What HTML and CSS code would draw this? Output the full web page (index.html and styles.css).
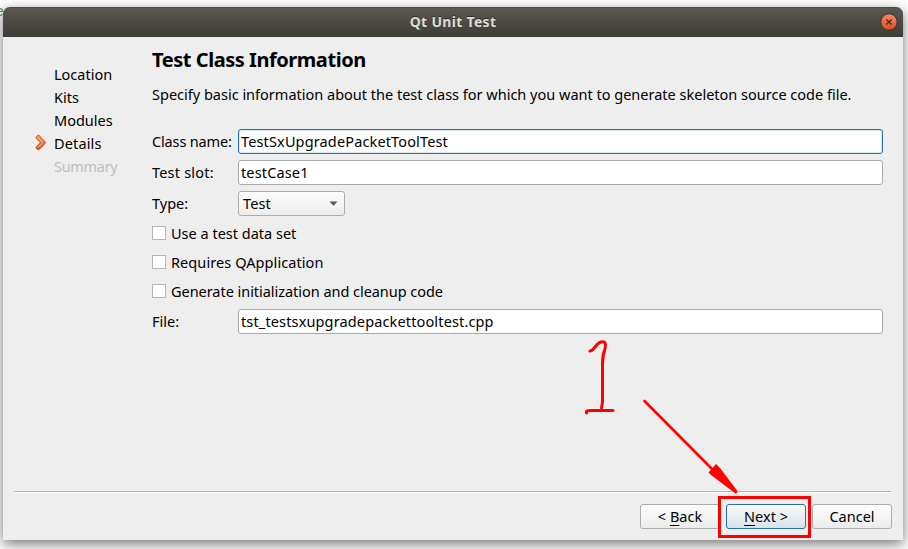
FILE: index.html
```html
<!DOCTYPE html>
<html lang="en">
<head>
<meta charset="utf-8">
<title>Qt Unit Test</title>
<link rel="stylesheet" href="styles.css">
</head>
<body>
<span class="behind">e</span>
<main class="window">
  <header class="titlebar">
    <h1 class="window-title">Qt Unit Test</h1>
    <svg class="close" viewBox="0 0 18 18" width="18" height="18">
      <defs><linearGradient id="cg" x1="0" y1="0" x2="0" y2="1"><stop offset="0" stop-color="#f58b68"/><stop offset="1" stop-color="#e2491c"/></linearGradient></defs>
      <circle cx="9" cy="9" r="8.2" fill="url(#cg)" stroke="#35342f"/>
      <path d="M6.4 6.4l5.2 5.2M11.6 6.4l-5.2 5.2" stroke="#53291b" stroke-width="1.4"/>
    </svg>
  </header>
  <div class="content">
    <nav class="steps">
      <div class="step">Location</div>
      <div class="step">Kits</div>
      <div class="step">Modules</div>
      <div class="step current">
        <svg class="chevron" viewBox="0 0 12 17" width="12" height="17">
          <defs><linearGradient id="ch" x1="0" y1="0" x2="0" y2="1"><stop offset="0" stop-color="#f29a62"/><stop offset="1" stop-color="#d9481c"/></linearGradient></defs>
          <path d="M1 3L3 1.2H4L10.400 8.200V9.200L4 15.800H3L1 14.200V13.200L5 8.800V8.200L1 4Z" fill="url(#ch)" stroke="#cf5a2e" stroke-width=".9"/>
          <path d="M2.800 3.200L7.600 8.600L3 13.600" fill="none" stroke="#fbc49a" stroke-width="1"/>
        </svg>
        <span>Details</span>
      </div>
      <div class="step disabled">Summary</div>
    </nav>
    <section class="page">
      <h2 class="heading">Test Class Information</h2>
      <p class="description">Specify basic information about the test class for which you want to generate skeleton source code file.</p>
      <div class="form">
        <span class="label-class">Class name:</span><div class="field focused">TestSxUpgradePacketToolTest</div>
        <span class="label-slot">Test slot:</span><div class="field">testCase1</div>
        <span>Type:</span>
        <div class="combo"><span>Test</span><svg viewBox="0 0 9 5" width="9" height="5"><path d="M.5.5h8L4.500 4.800z" fill="#555"/></svg></div>
        <div class="check"><i class="box"></i><span>Use a test data set</span></div>
        <div class="check requires"><i class="box"></i><span>Requires QApplication</span></div>
        <div class="check generate"><i class="box"></i><span>Generate initialization and cleanup code</span></div>
        <span>File:</span><div class="field">tst_testsxupgradepackettooltest.cpp</div>
      </div>
    </section>
  </div>
  <footer class="actions">
    <div class="button">&lt; <u>B</u>ack</div>
    <div class="button default"><u>N</u>ext &gt;</div>
    <div class="button">Cancel</div>
  </footer>
</main>
<svg class="annotation" viewBox="0 0 908 549" width="908" height="549">
  <g fill="none" stroke="#f00" stroke-width="3" stroke-linecap="round" stroke-linejoin="round">
    <path d="M590 351C594 351 596 343 601 342C606 341 606 344 605 349C603 354 602.500 357 602.500 364V402L601.500 408"/>
    <path d="M586.500 413V411.500Q587 410.500 590 410.500H613"/>
    <path d="M644.500 401L712 469" stroke-width="2.600"/>
    <rect x="719.500" y="497.500" width="90" height="39" stroke-linejoin="miter"/>
  </g>
  <path d="M716 464L708.500 472.500L711 475L735.500 493.500L737.500 492.500L737 490.500L720 468Z" fill="#f00"/>
</svg>
</body>
</html>
```
FILE: styles.css
```css
* { box-sizing: border-box; }
body {
  margin: 0;
  width: 908px;
  height: 549px;
  padding: 7px 5px 9px 3px;
  overflow: hidden;
  background: #fff;
  color: #000;
  font: 14.5px/23px "Noto Sans", sans-serif;
}
.behind {
  position: absolute;
  left: -5px;
  top: 2px;
  color: #54a010;
  font: 15px/22px "Liberation Mono", monospace;
}
.window {
  position: relative;
  height: 533px;
  display: flex;
  flex-direction: column;
  background: #eee;
  border-radius: 7px 7px 0 0;
  box-shadow: 0 4px 14px rgba(0, 0, 0, .55);
}
.titlebar {
  height: 30px;
  display: grid;
  grid-template-columns: 28px 1fr 28px;
  align-items: center;
  background: linear-gradient(#5b5850, #3d3c37);
  border-top: 1px solid #4b4943;
  border-radius: 7px 7px 0 0;
}
.window-title {
  grid-column: 2;
  margin: 0;
  padding-bottom: 2px;
  text-align: center;
  color: #dfdbd2;
  font-size: 14px;
  line-height: 20px;
  font-weight: 700;
  letter-spacing: .3px;
  text-shadow: 0 -1px #302f2b;
}
.close { display: block; margin: -1px 0 0 5px; }
.content {
  flex: 1;
  display: grid;
  grid-template-columns: 149px 731px;
}
.steps { padding: 26px 0 0 51px; }
.step { position: relative; height: 23px; white-space: nowrap; }
.current { letter-spacing: .15px; }
.disabled { color: #bebebe; letter-spacing: -.3px; }
.chevron { position: absolute; left: -19px; top: 2px; }
.page { padding-top: 8px; }
.heading {
  margin: 0;
  font-size: 20px;
  line-height: 30px;
  font-weight: 700;
  letter-spacing: -.45px;
  white-space: nowrap;
}
.description { margin: 8px 0 23px; white-space: nowrap; }
.form {
  display: grid;
  grid-template-columns: 86px 645px;
  grid-template-rows: repeat(3, 25px) repeat(3, 23px) 25px;
  row-gap: 6px;
  line-height: 25px;
  white-space: nowrap;
}
.label-class { letter-spacing: -.15px; }
.label-slot { letter-spacing: .2px; }
.field {
  padding-left: 2px;
  background: #fff;
  border: 1px solid #a9a9a9;
  border-radius: 3px;
  line-height: 23px;
  letter-spacing: .14px;
}
.focused { border-color: #2473a5; box-shadow: inset 0 0 0 1px #d9e7ef; }
.combo {
  width: 107px;
  padding: 0 6px 0 4px;
  display: flex;
  align-items: center;
  justify-content: space-between;
  border: 1px solid #acacac;
  border-radius: 3px;
  background: linear-gradient(#fdfdfd, #ececec);
  letter-spacing: .15px;
}
.check { grid-column: 1 / -1; display: flex; align-items: center; gap: 5px; line-height: 23px; }
.requires { letter-spacing: .08px; }
.generate { letter-spacing: -.04px; }
.box { width: 14px; height: 14px; margin-bottom: 1px; background: #fff; border: 1px solid #b4b4b4; }
.actions {
  height: 49px;
  margin: 0 12px 0 11px;
  padding: 12px 0 0 626px;
  display: grid;
  grid-template-columns: 80px 80px 80px;
  gap: 6px;
  border-top: 1px solid #b4b4b4;
  box-shadow: inset 0 1px #fff;
}
.button {
  height: 25px;
  display: flex;
  justify-content: center;
  line-height: 23px;
  white-space: pre;
  border: 1px solid #acacac;
  border-radius: 3px;
  background: linear-gradient(#fdfdfd, #ececec);
}
.default { border-color: #2473a5; background: linear-gradient(#f8fafb, #d9e2ea); }
u { text-underline-offset: 3px; text-decoration-thickness: 1px; }
.annotation { position: absolute; left: 0; top: 0; }
```
